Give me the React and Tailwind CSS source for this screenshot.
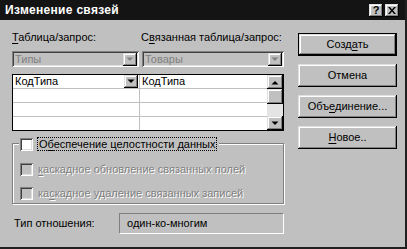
import React from "react";

const raised =
  "shadow-[inset_-1px_-1px_#000,inset_1px_1px_#dfdfdf,inset_-2px_-2px_#808080,inset_2px_2px_#fff]";
const sunken =
  "shadow-[inset_1px_1px_#808080,inset_-1px_-1px_#fff,inset_2px_2px_#404040,inset_-2px_-2px_#dfdfdf]";

function Tri({ color = "#000", disabled = false }) {
  return (
    <svg width="8" height="5" viewBox="0 0 8 5" className="block">
      {disabled && <path d="M2 1h5L4.5 3.5z" fill="#fff" />}
      <path d="M0.5 0.5h7L4 4z" fill={color} />
    </svg>
  );
}

function UpTri() {
  return (
    <svg width="8" height="5" viewBox="0 0 8 5" className="block">
      <path d="M0.5 4.5h7L4 1z" fill="#000" />
    </svg>
  );
}

function DropBtn({ disabled }) {
  return (
    <div className={`w-[14px] h-[13px] bg-[#c0c0c0] flex items-center justify-center ${raised}`}>
      <Tri color={disabled ? "#808080" : "#000"} disabled={disabled} />
    </div>
  );
}

function Combo({ text }) {
  return (
    <div className={`h-[16px] bg-[#c0c0c0] flex items-center pl-[3px] pr-[2px] ${sunken}`}>
      <span className="text-[#808080] flex-1 leading-[14px]">{text}</span>
      <DropBtn disabled />
    </div>
  );
}

function CheckBox({ enabled }) {
  return (
    <div
      className={`w-[13px] h-[13px] shrink-0 ${enabled ? "bg-white" : "bg-[#c0c0c0]"} ${sunken}`}
    />
  );
}

function Btn({ children, isDefault }) {
  if (isDefault) {
    return (
      <div className="h-[23px] border border-black">
        <div className={`h-full bg-[#c0c0c0] flex items-center justify-center ${raised}`}>
          {children}
        </div>
      </div>
    );
  }
  return (
    <div className={`h-[23px] bg-[#c0c0c0] flex items-center justify-center ${raised}`}>
      {children}
    </div>
  );
}

export default function App() {
  return (
    <div className="w-[407px] h-[249px] bg-[#c0c0c0] font-['Liberation_Sans',Arial,sans-serif] text-[11px] text-black border-r-2 border-b-2 border-r-[#202020] border-b-[#202020] flex flex-col overflow-hidden">
      {/* Title bar */}
      <div className="h-[20px] shrink-0 bg-[#141414] flex items-center pl-[5px] pr-[6px]">
        <span className="text-white font-bold text-[12px] tracking-[0.3px]">Изменение связей</span>
        <div className="ml-auto flex gap-[2px]">
          <div className={`w-[14px] h-[13px] bg-[#c0c0c0] flex items-center justify-center font-bold text-[11px] leading-none ${raised}`}>
            ?
          </div>
          <div className={`w-[14px] h-[13px] bg-[#c0c0c0] flex items-center justify-center ${raised}`}>
            <svg width="8" height="7" viewBox="0 0 8 7">
              <path d="M0 0h2l2 2.5L6 0h2L5 3.5 8 7H6L4 4.5 2 7H0l3-3.5z" fill="#000" />
            </svg>
          </div>
        </div>
      </div>

      {/* Body */}
      <div className="flex pl-[12px] pt-[10px]">
        <div className="w-[272px] flex flex-col">
          <div className="grid grid-cols-[129px_143px] h-[14px] leading-[14px]">
            <span>
              <span className="underline underline-offset-2">Т</span>аблица/запрос:
            </span>
            <span>
              С<span className="underline underline-offset-2">в</span>язанная таблица/запрос:
            </span>
          </div>

          <div className="grid grid-cols-[127px_142px] gap-[3px] mt-[7px]">
            <Combo text="Типы" />
            <Combo text="Товары" />
          </div>

          {/* Grid */}
          <div className="mt-[7px] h-[57px] border border-black bg-white flex">
            <div className="flex-1 flex flex-col">
              {[0, 1, 2, 3].map((i) => (
                <div
                  key={i}
                  className={`flex ${i < 3 ? "h-[14px] border-b border-[#c0c0c0]" : "h-[13px]"}`}
                >
                  <div className="w-[127px] border-r border-[#c0c0c0] flex items-center pl-[2px] pr-[1px]">
                    {i === 0 && (
                      <>
                        <span className="flex-1 leading-[13px]">КодТипа</span>
                        <DropBtn />
                      </>
                    )}
                  </div>
                  <div className="flex-1 flex items-center pl-[2px]">
                    {i === 0 && <span className="leading-[13px]">КодТипа</span>}
                  </div>
                </div>
              ))}
            </div>
            <div className="w-[16px] flex flex-col">
              <div className={`h-[14px] bg-[#c0c0c0] flex items-center justify-center ${raised}`}>
                <UpTri />
              </div>
              <div className={`h-[15px] bg-[#c0c0c0] ${raised}`} />
              <div className="flex-1 bg-[#e4e4e4]" />
              <div className={`h-[14px] bg-[#c0c0c0] flex items-center justify-center ${raised}`}>
                <Tri />
              </div>
            </div>
          </div>

          {/* Group box */}
          <div className="relative mt-[12px] h-[61px] border border-[#808080] shadow-[inset_1px_1px_#fff,1px_1px_#fff] pl-[7px] pt-[19px] flex flex-col gap-[11px]">
            <div className="absolute left-[6px] top-[-7px] bg-[#c0c0c0] flex items-center gap-[4px] pl-[1px] pr-[2px]">
              <CheckBox enabled />
              <span className="border border-dotted border-black px-[1px] leading-[12px]">
                О<span className="underline underline-offset-2">б</span>еспечение целостности данных
              </span>
            </div>
            <div className="flex items-center gap-[5px] h-[13px]">
              <CheckBox />
              <span className="text-[#808080] [text-shadow:1px_1px_0_#fff]">
                <span className="underline underline-offset-2">к</span>аскадное обновление связанных полей
              </span>
            </div>
            <div className="flex items-center gap-[5px] h-[13px]">
              <CheckBox />
              <span className="text-[#808080] [text-shadow:1px_1px_0_#fff]">
                ка<span className="underline underline-offset-2">с</span>кадное удаление связанных записей
              </span>
            </div>
          </div>

          {/* Relationship type */}
          <div className="mt-[9px] flex items-center">
            <span className="w-[107px] pl-[2px]">Тип отношения:</span>
            <div className="w-[165px] h-[21px] border border-t-[#808080] border-l-[#808080] border-b-white border-r-white flex items-center pl-[7px]">
              один-ко-многим
            </div>
          </div>
        </div>

        {/* Buttons */}
        <div className="ml-[14px] w-[99px] flex flex-col gap-[8px] pt-[3px]">
          <Btn isDefault>
            <span>
              Созд<span className="underline underline-offset-2">а</span>ть
            </span>
          </Btn>
          <Btn>Отмена</Btn>
          <Btn>
            <span>
              Объ<span className="underline underline-offset-2">е</span>динение...
            </span>
          </Btn>
          <Btn>
            <span>
              <span className="underline underline-offset-2">Н</span>овое..
            </span>
          </Btn>
        </div>
      </div>
    </div>
  );
}
